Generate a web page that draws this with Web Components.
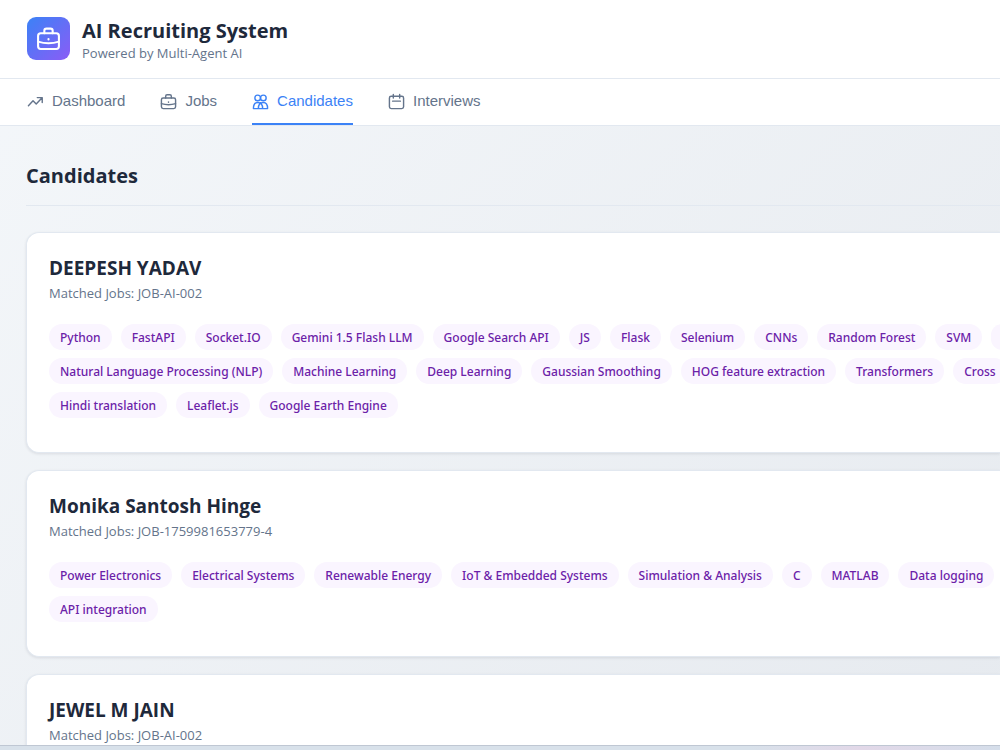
<!DOCTYPE html>
<html lang="en">
<head>
<meta charset="utf-8">
<meta name="viewport" content="width=device-width, initial-scale=1">
<title>AI Recruiting System</title>
<style>
  body { margin: 0; font-family: "Open Sans", "Noto Sans", sans-serif; color: #1e293b; }
</style>
</head>
<body>
<recruiting-app>
  <app-header slot="header" tagline="Powered by Multi-Agent AI">AI Recruiting System</app-header>
  <app-nav slot="nav">
    <nav-tab icon="trend">Dashboard</nav-tab>
    <nav-tab icon="case">Jobs</nav-tab>
    <nav-tab icon="people" active>Candidates</nav-tab>
    <nav-tab icon="calendar">Interviews</nav-tab>
  </app-nav>
  <page-heading>Candidates</page-heading>
  <candidate-card name="DEEPESH YADAV" jobs="JOB-AI-002">
    <skill-row>
      <skill-chip>Python</skill-chip><skill-chip>FastAPI</skill-chip><skill-chip>Socket.IO</skill-chip><skill-chip>Gemini 1.5 Flash LLM</skill-chip><skill-chip>Google Search API</skill-chip><skill-chip>JS</skill-chip><skill-chip>Flask</skill-chip><skill-chip>Selenium</skill-chip><skill-chip>CNNs</skill-chip><skill-chip>Random Forest</skill-chip><skill-chip>SVM</skill-chip><skill-chip></skill-chip>
    </skill-row>
    <skill-row>
      <skill-chip>Natural Language Processing (NLP)</skill-chip><skill-chip>Machine Learning</skill-chip><skill-chip>Deep Learning</skill-chip><skill-chip>Gaussian Smoothing</skill-chip><skill-chip>HOG feature extraction</skill-chip><skill-chip>Transformers</skill-chip><skill-chip>Cross</skill-chip>
    </skill-row>
    <skill-row>
      <skill-chip>Hindi translation</skill-chip><skill-chip>Leaflet.js</skill-chip><skill-chip>Google Earth Engine</skill-chip>
    </skill-row>
  </candidate-card>
  <candidate-card name="Monika Santosh Hinge" jobs="JOB-1759981653779-4">
    <skill-row>
      <skill-chip>Power Electronics</skill-chip><skill-chip>Electrical Systems</skill-chip><skill-chip>Renewable Energy</skill-chip><skill-chip>IoT &amp; Embedded Systems</skill-chip><skill-chip>Simulation &amp; Analysis</skill-chip><skill-chip>C</skill-chip><skill-chip>MATLAB</skill-chip><skill-chip>Data logging</skill-chip>
    </skill-row>
    <skill-row>
      <skill-chip>API integration</skill-chip>
    </skill-row>
  </candidate-card>
  <candidate-card name="JEWEL M JAIN" jobs="JOB-AI-002"></candidate-card>
</recruiting-app>

<script>
const ICONS = {
  trend: '<path d="M2 18l6.500-7 4.500 4.500L21 7M14.500 6.500H21.500V13.500"/>',
  case: '<rect x="2" y="7" width="20" height="15" rx="2.500"/><path d="M8 7V4.500a2 2 0 0 1 2-2h4a2 2 0 0 1 2 2V7M2 15q10 3 20 0M12 12.500v.5"/>',
  people: '<circle cx="8" cy="7" r="4"/><circle cx="16" cy="7" r="4"/><path d="M2 22c0-5.500 2-8.500 6-8.500s7 3 7 8.500zM22 22c0-5.500-2-8.500-6-8.500s-7 3-7 8.500z"/>',
  calendar: '<rect x="2" y="4.500" width="20" height="17.500" rx="2.500"/><path d="M7.500 2v5M16.500 2v5M6.500 11.500h11"/>'
};

function define(tag, html, setup) {
  customElements.define(tag, class extends HTMLElement {
    constructor() {
      super();
      const t = document.createElement('template');
      t.innerHTML = html;
      this.attachShadow({ mode: 'open' }).append(t.content.cloneNode(true));
    }
    connectedCallback() { if (setup) setup(this, this.shadowRoot); }
  });
}

define('line-icon', `
  <style>
    :host { display: block; flex: none; width: 17px; height: 17px; }
    svg { display: block; width: 100%; height: 100%; fill: none; stroke: currentColor; stroke-width: 2; stroke-linecap: round; stroke-linejoin: round; }
  </style>
  <svg viewBox="0 0 24 24" aria-hidden="true"></svg>`,
  (el, root) => { root.querySelector('svg').innerHTML = ICONS[el.getAttribute('name')] || ''; });

define('app-header', `
  <style>
    :host { display: flex; align-items: flex-start; gap: 12px; padding: 16px 27px 17px; background: #fff; border-bottom: 1px solid #e2e8f0; }
    .logo { display: grid; place-items: center; width: 43px; height: 43px; margin-top: 1px; border-radius: 9px; color: #fff; background: linear-gradient(135deg, #3b82f6, #8b5cf6); }
    line-icon { width: 25px; height: 25px; }
    h1 { margin: 0; font-size: 20px; line-height: 30px; font-weight: 700; }
    p { margin: 0; font-size: 13px; line-height: 15px; color: #64748b; }
  </style>
  <div class="logo"><line-icon name="case"></line-icon></div>
  <div><h1><slot></slot></h1><p></p></div>`,
  (el, root) => { root.querySelector('p').textContent = el.getAttribute('tagline'); });

define('app-nav', `
  <style>
    :host { display: block; background: #fff; border-bottom: 1px solid #e2e8f0; }
    nav { display: flex; gap: 35px; padding: 0 27px; }
  </style>
  <nav aria-label="Main"><slot></slot></nav>`);

define('nav-tab', `
  <style>
    :host { display: block; color: #64748b; }
    :host([active]) { color: #3b82f6; }
    button { display: flex; align-items: center; gap: 8px; height: 46px; margin: 0; padding: 0; border: 0; border-bottom: 2px solid transparent; background: none; color: inherit; font: 15px/20px "Liberation Sans", Arial, sans-serif; cursor: pointer; }
    :host([active]) button { border-bottom-color: #3b82f6; }
  </style>
  <button type="button"><span class="icon"></span><span><slot></slot></span></button>`,
  (el, root) => {
    const icon = document.createElement('line-icon');
    icon.setAttribute('name', el.getAttribute('icon'));
    root.querySelector('.icon').replaceWith(icon);
  });

define('page-heading', `
  <style>
    :host { display: block; padding-bottom: 15px; margin-bottom: 9px; border-bottom: 1px solid #e2e8f0; }
    h2 { margin: 0; font-size: 20px; line-height: 28px; font-weight: 700; }
  </style>
  <h2><slot></slot></h2>`);

define('candidate-card', `
  <style>
    :host { display: block; padding: 22px 0 34px 22px; background: #fff; border: 1px solid #e2e8f0; border-right: 0; border-radius: 13px 0 0 13px; box-shadow: 0 1px 3px rgba(15, 23, 42, .1); }
    h3 { margin: 0; font-size: 19px; line-height: 26px; font-weight: 700; }
    p { margin: 0 0 19px; font-size: 13px; line-height: 24px; color: #64748b; }
    .skills { display: flex; flex-direction: column; gap: 8px; overflow: hidden; }
  </style>
  <h3></h3><p></p><div class="skills"><slot></slot></div>`,
  (el, root) => {
    root.querySelector('h3').textContent = el.getAttribute('name');
    root.querySelector('p').textContent = 'Matched Jobs: ' + el.getAttribute('jobs');
  });

define('skill-row', `
  <style>:host { display: flex; gap: 9px; }</style>
  <slot></slot>`);

define('skill-chip', `
  <style>
    :host { display: block; flex: none; height: 26px; padding: 0 11px; border-radius: 13px; background: #faf5ff; color: #6b21a8; font-family: "Noto Sans", sans-serif; font-size: 12px; line-height: 27px; font-weight: 500; white-space: nowrap; }
  </style>
  <slot></slot>`);

define('recruiting-app', `
  <style>
    :host { display: flex; flex-direction: column; height: 100vh; overflow: hidden; background: linear-gradient(135deg, #f4f7fa, #e6eaef); }
    ::slotted([slot]) { flex: none; }
    main { flex: 1; min-height: 0; overflow: hidden; display: flex; flex-direction: column; gap: 17px; padding: 36px 0 0 26px; }
    main ::slotted(*) { flex: none; }
    footer { flex: none; height: 4px; border-top: 1px solid #bfc7d3; background: linear-gradient(90deg, #d8e1ea 75%, #e2d8e8 86%, #d5deea); }
  </style>
  <slot name="header"></slot>
  <slot name="nav"></slot>
  <main><slot></slot></main>
  <footer></footer>`);
</script>
</body>
</html>
